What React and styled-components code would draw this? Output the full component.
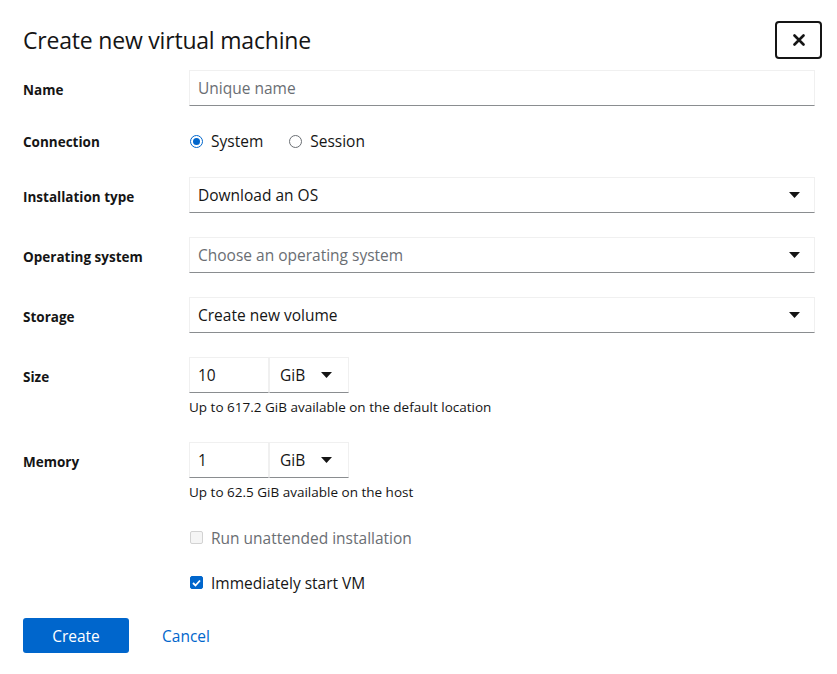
import React from "react";
import styled, { createGlobalStyle } from "styled-components";

const Global = createGlobalStyle`
  html, body { margin: 0; padding: 0; background: #fff; }
  body { font-family: "Open Sans", "Noto Sans", sans-serif; color: #151515; }
  * { box-sizing: border-box; }
`;

const Page = styled.div`
  padding: 21px 15px 0 23px;
  width: 837px;
`;

const Header = styled.div`
  display: flex;
  align-items: center;
  justify-content: space-between;
  height: 38px;
  margin-bottom: 11px;
`;

const Title = styled.h1`
  margin: 0;
  font-family: "Open Sans", sans-serif;
  font-size: 23px;
  font-weight: 500;
  letter-spacing: -0.2px;
  color: #151515;
`;

const CloseButton = styled.button`
  width: 47px;
  height: 38px;
  border: 2px solid #151515;
  border-radius: 4px;
  background: #fff;
  display: flex;
  align-items: center;
  justify-content: center;
  padding: 0;
`;

const Form = styled.div`
  display: grid;
  grid-template-columns: 150px 626px;
  column-gap: 16px;
  row-gap: 24px;
`;

const Label = styled.div`
  font-size: 13.5px;
  font-weight: 700;
  line-height: 21px;
  padding-top: ${(p) => p.$offset ?? 10}px;
`;

const Field = styled.div`
  display: flex;
  flex-direction: column;
  grid-column: ${(p) => (p.$full ? "2" : "auto")};
`;

const TextInput = styled.div`
  height: 36px;
  width: ${(p) => p.$width || "100%"};
  border: 1px solid #f0f0f0;
  border-bottom-color: #8a8d90;
  padding: 0 8px;
  display: flex;
  align-items: center;
  font-size: 15.5px;
  color: ${(p) => (p.$placeholder ? "#6a6e73" : "#151515")};
`;

const Select = styled(TextInput)`
  justify-content: space-between;
  padding-right: 14px;
`;

const Caret = () => (
  <svg width="11" height="6" viewBox="0 0 11 6">
    <path d="M0 0 H11 L5.5 6 Z" fill="#151515" />
  </svg>
);

const RadioGroup = styled.div`
  display: flex;
  align-items: center;
  gap: 25px;
  height: 24px;
  margin-top: -1px;
`;

const RadioItem = styled.label`
  display: flex;
  align-items: center;
  gap: 8px;
  font-size: 15.5px;
`;

const RadioDot = styled.span`
  width: 13px;
  height: 13px;
  border-radius: 50%;
  border: 1px solid ${(p) => (p.$checked ? "#06c" : "#6a6e73")};
  display: inline-flex;
  align-items: center;
  justify-content: center;
  margin-left: 1px;
  &::after {
    content: "";
    width: 7px;
    height: 7px;
    border-radius: 50%;
    background: ${(p) => (p.$checked ? "#06c" : "transparent")};
  }
`;

const UnitRow = styled.div`
  display: flex;
`;

const UnitSelect = styled(Select)`
  border-left-color: #f0f0f0;
  padding: 0 16px 0 10px;
`;

const Helper = styled.div`
  font-size: 13.5px;
  line-height: 21px;
  margin-top: 4px;
  color: #151515;
`;

const CheckRow = styled.label`
  display: flex;
  align-items: center;
  gap: 8px;
  font-size: 15.5px;
  height: 21px;
  color: ${(p) => (p.$disabled ? "#6a6e73" : "#151515")};
`;

const Box = styled.span`
  width: 13px;
  height: 13px;
  border-radius: 2px;
  margin-left: 1px;
  display: inline-flex;
  align-items: center;
  justify-content: center;
  background: ${(p) => (p.$checked ? "#06c" : "#f5f5f5")};
  border: 1px solid ${(p) => (p.$checked ? "#06c" : "#d2d2d2")};
`;

const Actions = styled.div`
  display: flex;
  align-items: center;
  gap: 16px;
  margin-top: 25px;
`;

const PrimaryButton = styled.button`
  width: 106px;
  height: 35px;
  background: #06c;
  border: none;
  border-radius: 3px;
  color: #fff;
  font-family: inherit;
  font-size: 15.5px;
`;

const LinkButton = styled.button`
  background: none;
  border: none;
  padding: 0 17px;
  color: #06c;
  font-family: inherit;
  font-size: 15.5px;
`;

export default function App() {
  return (
    <>
      <Global />
      <Page>
        <Header>
          <Title>Create new virtual machine</Title>
          <CloseButton aria-label="Close">
            <svg width="12" height="12" viewBox="0 0 12 12">
              <path d="M1.5 1.5 L10.5 10.5 M10.5 1.5 L1.5 10.5" stroke="#151515" strokeWidth="2.6" strokeLinecap="round" />
            </svg>
          </CloseButton>
        </Header>
        <Form>
          <Label>Name</Label>
          <Field>
            <TextInput $placeholder>Unique name</TextInput>
          </Field>

          <Label $offset={2}>Connection</Label>
          <Field>
            <RadioGroup>
              <RadioItem><RadioDot $checked />System</RadioItem>
              <RadioItem><RadioDot />Session</RadioItem>
            </RadioGroup>
          </Field>

          <Label>Installation type</Label>
          <Field>
            <Select>Download an OS<Caret /></Select>
          </Field>

          <Label>Operating system</Label>
          <Field>
            <Select $placeholder>Choose an operating system<Caret /></Select>
          </Field>

          <Label>Storage</Label>
          <Field>
            <Select>Create new volume<Caret /></Select>
          </Field>

          <Label>Size</Label>
          <Field>
            <UnitRow>
              <TextInput $width="80px">10</TextInput>
              <UnitSelect $width="80px">GiB<Caret /></UnitSelect>
            </UnitRow>
            <Helper>Up to 617.2 GiB available on the default location</Helper>
          </Field>

          <Label>Memory</Label>
          <Field>
            <UnitRow>
              <TextInput $width="80px">1</TextInput>
              <UnitSelect $width="80px">GiB<Caret /></UnitSelect>
            </UnitRow>
            <Helper>Up to 62.5 GiB available on the host</Helper>
          </Field>

          <Field $full>
            <CheckRow $disabled><Box />Run unattended installation</CheckRow>
          </Field>

          <Field $full>
            <CheckRow>
              <Box $checked>
                <svg width="9" height="8" viewBox="0 0 9 8">
                  <path d="M1 4 L3.5 6.5 L8 1.5" stroke="#fff" strokeWidth="1.8" fill="none" />
                </svg>
              </Box>
              Immediately start VM
            </CheckRow>
          </Field>
        </Form>
        <Actions>
          <PrimaryButton>Create</PrimaryButton>
          <LinkButton>Cancel</LinkButton>
        </Actions>
      </Page>
    </>
  );
}
